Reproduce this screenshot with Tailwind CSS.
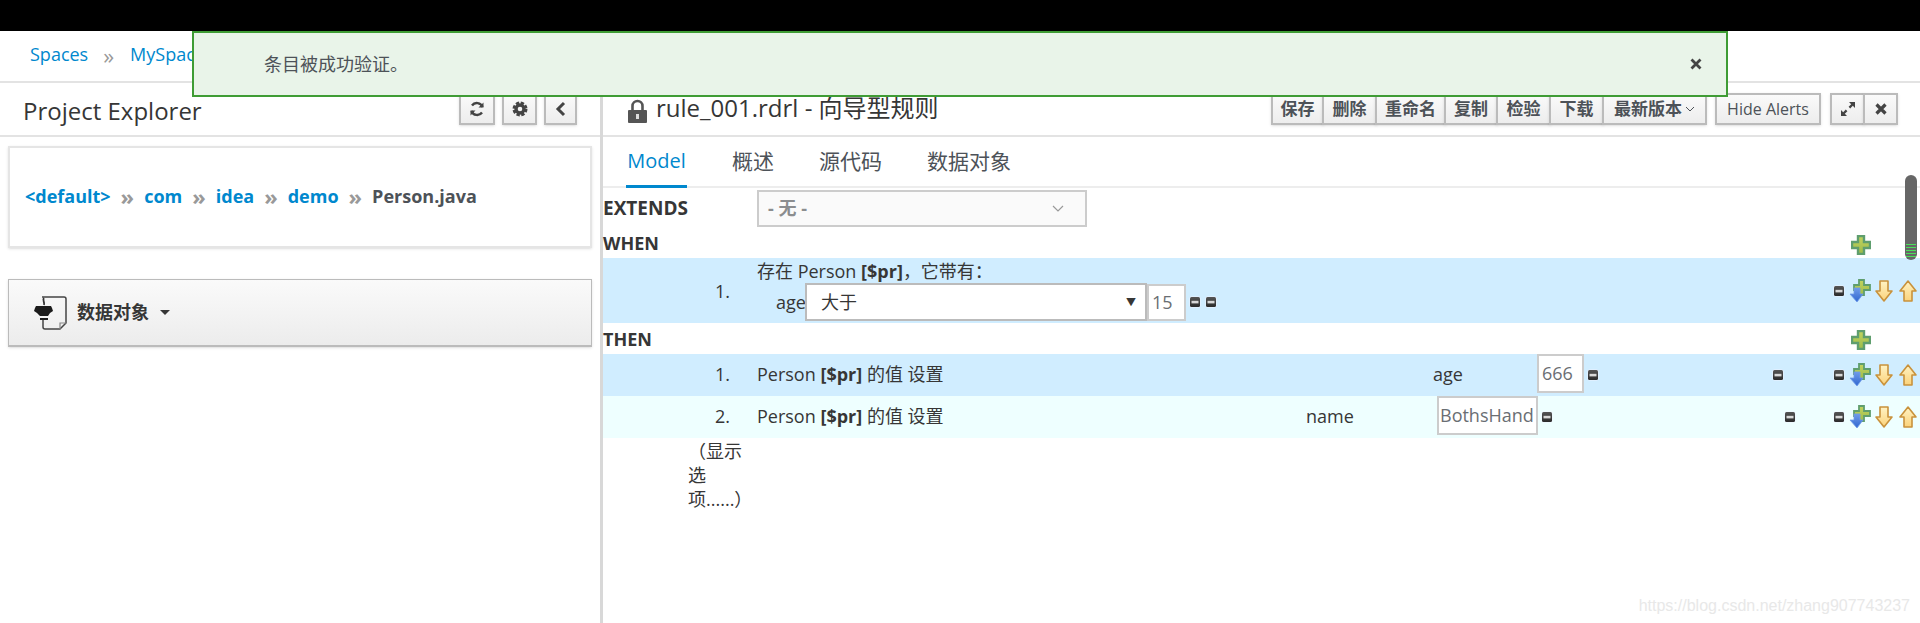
<!DOCTYPE html>
<html lang="en">
<head>
  <meta charset="UTF-8" />
  <title>rule_001.rdrl</title>
  <script src="https://cdn.jsdelivr.net/npm/@tailwindcss/browser@4"></script>
</head>
<body class="relative h-[623px] overflow-hidden bg-white font-['Open_Sans','Noto_Sans_CJK_SC',sans-serif] text-[#363636]">

  <!-- Shared icons -->
  <svg class="absolute h-0 w-0">
    <defs>
      <linearGradient id="plusFill" x1="0" y1="0" x2="0" y2="1"><stop offset="0" stop-color="#c3d45f" /><stop offset="1" stop-color="#9dbb4a" /></linearGradient>
      <linearGradient id="arrowFill" x1="0" y1="0" x2="0" y2="1"><stop offset="0" stop-color="#fff3c4" /><stop offset="1" stop-color="#fbd27a" /></linearGradient>
      <linearGradient id="blueFill" x1="0" y1="0" x2="0" y2="1"><stop offset="0" stop-color="#6f9be8" /><stop offset="1" stop-color="#2f66d0" /></linearGradient>
      <linearGradient id="minusFill" x1="0" y1="0" x2="0" y2="1"><stop offset="0" stop-color="#555" /><stop offset="1" stop-color="#2b2b2b" /></linearGradient>
      <symbol id="i-plus" viewBox="0 0 20 20">
        <path d="M7 1h6v6h6v6h-6v6H7v-6H1V7h6z" fill="url(#plusFill)" stroke="#5f9e6e" stroke-width="2.400" />
      </symbol>
      <symbol id="i-minus" viewBox="0 0 12 12">
        <rect x="0.500" y="0.500" width="11" height="11" rx="2" fill="#eef3ff" />
        <rect x="1" y="1" width="10" height="10" rx="1.500" fill="url(#minusFill)" />
        <rect x="2.500" y="4.800" width="7" height="2.600" fill="#d8d8d8" />
      </symbol>
      <symbol id="i-combo" viewBox="0 0 22 24">
        <path d="M10 1h5v5h6v5h-6v5h-5v-5H5V6h5z" fill="url(#plusFill)" stroke="#5f9e6e" stroke-width="1.800" />
        <path d="M5 9h6v6h3l-6 8-7-8h4z" fill="url(#blueFill)" stroke="#6f9be8" stroke-width="0.800" />
      </symbol>
      <symbol id="i-down" viewBox="0 0 18 22">
        <path d="M5 1h8v10h4L9 21 1 11h4z" fill="url(#arrowFill)" stroke="#c9923c" stroke-width="1.600" stroke-linejoin="round" />
      </symbol>
      <symbol id="i-up" viewBox="0 0 18 22">
        <path d="M5 21h8V11h4L9 1 1 11h4z" fill="url(#arrowFill)" stroke="#c9923c" stroke-width="1.600" stroke-linejoin="round" />
      </symbol>
    </defs>
  </svg>

  <!-- Top bars -->
  <div class="h-[31px] bg-black"></div>
  <div class="flex h-[52px] items-center border-b-2 border-[#e3e3e3] pb-[3px] pl-[30px] text-[18px] text-[#0088ce]">
    <span>Spaces</span>
    <span class="ml-[15px] text-[22px] leading-none text-[#999]">»</span>
    <span class="ml-[16px]">MySpace</span>
  </div>

  <div class="flex h-[540px]">
    <!-- Left panel -->
    <div class="w-[600px] shrink-0">
      <div class="flex h-[54px] items-start justify-between border-b-2 border-[#e3e3e3] pt-[10px] pl-[23px] pr-[23px]">
        <span class="text-[24px] leading-[36px]">Project Explorer</span>
        <div class="flex gap-[7px]">
          <button class="flex h-[32px] w-[36px] items-center justify-center border-2 border-[#bbb] bg-linear-to-b from-[#fafafa] to-[#ededed] shadow-sm">
            <svg width="16" height="16" viewBox="0 0 16 16" fill="none" stroke="#444" stroke-width="2.400"><path d="M13.500 6A6 6 0 0 0 3 4.500" /><path d="M2.500 10A6 6 0 0 0 13 11.500" /><path d="M14.500 1.500v5h-5z" fill="#444" stroke="none" /><path d="M1.500 14.500v-5h5z" fill="#444" stroke="none" /></svg>
          </button>
          <button class="flex h-[32px] w-[35px] items-center justify-center border-2 border-[#bbb] bg-linear-to-b from-[#fafafa] to-[#ededed] shadow-sm">
            <svg width="16" height="16" viewBox="0 0 16 16" fill="none" stroke="#444"><circle cx="8" cy="8" r="4" stroke-width="3.400" /><circle cx="8" cy="8" r="6" stroke-width="3" stroke-dasharray="3.200 1.510" /></svg>
          </button>
          <button class="flex h-[32px] w-[33px] items-center justify-center border-2 border-[#bbb] bg-linear-to-b from-[#fafafa] to-[#ededed] shadow-sm">
            <svg width="12" height="16" viewBox="0 0 12 16" fill="none" stroke="#444" stroke-width="3"><path d="M9 2 3 8l6 6" /></svg>
          </button>
        </div>
      </div>

      <div class="mx-[8px] mt-[9px] flex h-[102px] items-center border-2 border-[#e5e5e5] pb-[2px] pl-[15px] text-[18px] font-bold text-[#0088ce] shadow-sm">
        <span>&lt;default&gt;</span>
        <span class="mx-[10px] text-[22px] leading-none text-[#999]">»</span>
        <span>com</span>
        <span class="mx-[10px] text-[22px] leading-none text-[#999]">»</span>
        <span>idea</span>
        <span class="mx-[10px] text-[22px] leading-none text-[#999]">»</span>
        <span>demo</span>
        <span class="mx-[10px] text-[22px] leading-none text-[#999]">»</span>
        <span class="text-[#4d5258]">Person.java</span>
      </div>

      <div class="mx-[8px] mt-[31px] flex h-[68px] items-center border border-b-2 border-[#bbb] bg-linear-to-b from-[#fafafa] to-[#ececec] pl-[24px] shadow-sm">
        <svg width="36" height="36" viewBox="0 0 36 36" fill="none">
          <path d="M9 2h22a2 2 0 0 1 2 2v24l-6 6H12a2 2 0 0 1-2-2v-8" stroke="#444" stroke-width="1.500" />
          <path d="M33 28h-6v6" stroke="#888" stroke-width="1.200" />
          <path d="M3 11h15l1 2 1 3-3 2-2 3H7l-3-3-3-2 1-3z" fill="#1b1b1b" />
          <path d="M7 24h8" stroke="#1b1b1b" stroke-width="2" />
          <path d="M11 3c-2 2 1 4 0 7" stroke="#333" stroke-width="1.800" />
        </svg>
        <span class="ml-[8px] text-[18px] font-bold">数据对象</span>
        <span class="ml-[11px] h-0 w-0 border-x-[5px] border-t-[5px] border-x-transparent border-t-[#363636]"></span>
      </div>
    </div>

    <!-- Right panel -->
    <div class="flex-1 border-l-[3px] border-[#d8d8d8]">
      <div class="flex h-[54px] items-start justify-between border-b-2 border-[#e3e3e3] pt-[10px] pl-[25px] pr-[22px]">
        <div class="flex items-center gap-[9px]">
          <svg class="mt-[6px]" width="19" height="24" viewBox="0 0 19 24"><path d="M4.500 12V7a5 5 0 0 1 10 0v5" fill="none" stroke="#555" stroke-width="2.600" /><rect y="11" width="19" height="13" rx="1" fill="#555" /><rect x="8" y="15" width="3" height="5" fill="#ddd" /></svg>
          <span class="text-[24px] leading-[30px]">rule_001.rdrl - 向导型规则</span>
        </div>
        <div class="flex items-start">
          <div class="flex h-[32px] text-[17px] font-semibold text-[#4d5258]">
            <button class="w-[53px] border-2 border-[#bbb] bg-linear-to-b from-[#fafafa] to-[#ededed] shadow-sm">保存</button>
            <button class="-ml-[2px] w-[55px] border-2 border-[#bbb] bg-linear-to-b from-[#fafafa] to-[#ededed] shadow-sm">删除</button>
            <button class="-ml-[2px] w-[71px] border-2 border-[#bbb] bg-linear-to-b from-[#fafafa] to-[#ededed] shadow-sm">重命名</button>
            <button class="-ml-[2px] w-[54px] border-2 border-[#bbb] bg-linear-to-b from-[#fafafa] to-[#ededed] shadow-sm">复制</button>
            <button class="-ml-[2px] w-[55px] border-2 border-[#bbb] bg-linear-to-b from-[#fafafa] to-[#ededed] shadow-sm">检验</button>
            <button class="-ml-[2px] w-[55px] border-2 border-[#bbb] bg-linear-to-b from-[#fafafa] to-[#ededed] shadow-sm">下载</button>
            <button class="-ml-[2px] flex w-[105px] items-center justify-center gap-[3px] border-2 border-[#bbb] bg-linear-to-b from-[#fafafa] to-[#ededed] shadow-sm">最新版本
              <svg width="10" height="6" viewBox="0 0 10 6" fill="none" stroke="#4d5258"><path d="m1 1 4 4 4-4" /></svg>
            </button>
          </div>
          <button class="ml-[8px] h-[32px] w-[106px] border-2 border-[#bbb] bg-linear-to-b from-[#fafafa] to-[#ededed] text-[16px] font-medium text-[#4d5258] shadow-sm">Hide Alerts</button>
          <div class="ml-[9px] flex h-[32px]">
            <button class="flex w-[35px] items-center justify-center border-2 border-[#bbb] bg-linear-to-b from-[#fafafa] to-[#ededed] shadow-sm">
              <svg width="16" height="16" viewBox="0 0 16 16" fill="#444"><path d="M9 1h6v6l-2.200-2.200-2.600 2.600-1.600-1.600 2.600-2.600zM7 15H1V9l2.200 2.200 2.600-2.600 1.600 1.600-2.600 2.600z" /></svg>
            </button>
            <button class="-ml-[2px] flex w-[35px] items-center justify-center border-2 border-[#bbb] bg-linear-to-b from-[#fafafa] to-[#ededed] shadow-sm">
              <svg width="12" height="12" viewBox="0 0 12 12" fill="none" stroke="#444" stroke-width="3.200"><path d="m1.500 1.500 9 9M10.500 1.500l-9 9" /></svg>
            </button>
          </div>
        </div>
      </div>

      <!-- Tabs -->
      <div class="flex h-[51px] border-b-2 border-[#ededed] pl-[23px] text-[21px] text-[#4d5258]">
        <span class="-mb-[2px] flex w-[61px] items-center justify-center border-b-[3px] border-[#0088ce] text-[20px] text-[#0088ce]">Model</span>
        <span class="ml-[45px] flex items-center">概述</span>
        <span class="ml-[45px] flex items-center">源代码</span>
        <span class="ml-[45px] flex items-center">数据对象</span>
      </div>

      <!-- EXTENDS -->
      <div class="flex h-[39px] items-end">
        <span class="w-[154px] self-center pt-[2px] text-[19px] font-bold">EXTENDS</span>
        <div class="flex h-[37px] w-[330px] items-center justify-between border-2 border-[#ccc] bg-[#fafafa] px-[9px] text-[18px] font-bold text-[#8b8d8f]">
          <span>- 无 -</span>
          <svg class="mr-[12px]" width="12" height="7" viewBox="0 0 12 7" fill="none" stroke="#999" stroke-width="1.200"><path d="m1 1 5 5 5-5" /></svg>
        </div>
      </div>

      <!-- WHEN -->
      <div class="flex h-[31px] items-center justify-between pr-[49px]">
        <span class="mt-[1px] text-[18px] font-bold">WHEN</span>
        <svg class="mt-[4px]" width="20" height="20"><use href="#i-plus" /></svg>
      </div>
      <div class="flex h-[65px] items-center bg-[#d0edff] text-[18px] leading-[24px]">
        <span class="w-[154px] shrink-0 pl-[112px]">1.</span>
        <div class="flex flex-col">
          <div class="h-[24px] -mt-[1px]">存在 Person <b>[$pr]</b>，它带有：</div>
          <div class="flex items-center">
            <span class="w-[48px] shrink-0 pl-[19px]">age</span>
            <div class="flex h-[38px] w-[342px] items-center justify-between border-2 border-[#bbb] bg-white pl-[14px] pr-[9px]">
              <span>大于</span>
              <span class="text-[10px]">▼</span>
            </div>
            <div class="flex h-[37px] w-[39px] items-center border-2 border-[#ccc] bg-white pl-[3px] text-[#6a6e73]">15</div>
            <svg class="ml-[3px]" width="12" height="12"><use href="#i-minus" /></svg>
            <svg class="ml-[4px]" width="12" height="12"><use href="#i-minus" /></svg>
          </div>
        </div>
        <div class="ml-auto flex items-center gap-[4px] pr-[3px]">
          <svg width="12" height="12"><use href="#i-minus" /></svg>
          <svg width="22" height="24"><use href="#i-combo" /></svg>
          <svg width="18" height="22"><use href="#i-down" /></svg>
          <svg class="ml-[2px]" width="18" height="22"><use href="#i-up" /></svg>
        </div>
      </div>

      <!-- THEN -->
      <div class="flex h-[31px] items-center justify-between pr-[49px]">
        <span class="mt-[1px] text-[18px] font-bold">THEN</span>
        <svg class="mt-[3px]" width="20" height="20"><use href="#i-plus" /></svg>
      </div>
      <div class="flex h-[42px] items-center bg-[#d0edff] text-[18px]">
        <span class="w-[154px] shrink-0 pb-[2px] pl-[112px]">1.</span>
        <span class="w-[676px] shrink-0 pb-[2px]">Person <b>[$pr]</b> 的值 设置</span>
        <span class="w-[104px] shrink-0 pb-[2px]">age</span>
        <div class="flex h-[39px] w-[47px] shrink-0 items-center self-start border-2 border-[#ccc] bg-white pl-[3px] text-[#6a6e73]">666</div>
        <svg class="ml-[3px]" width="12" height="12"><use href="#i-minus" /></svg>
        <svg class="ml-[173px]" width="12" height="12"><use href="#i-minus" /></svg>
        <div class="ml-auto flex items-center gap-[4px] pr-[3px]">
          <svg width="12" height="12"><use href="#i-minus" /></svg>
          <svg width="22" height="24"><use href="#i-combo" /></svg>
          <svg width="18" height="22"><use href="#i-down" /></svg>
          <svg class="ml-[2px]" width="18" height="22"><use href="#i-up" /></svg>
        </div>
      </div>
      <div class="flex h-[42px] items-center bg-[#eeffff] text-[18px]">
        <span class="w-[154px] shrink-0 pb-[2px] pl-[112px]">2.</span>
        <span class="w-[549px] shrink-0 pb-[2px]">Person <b>[$pr]</b> 的值 设置</span>
        <span class="w-[131px] shrink-0 pb-[2px]">name</span>
        <div class="flex h-[39px] w-[101px] shrink-0 items-center self-start overflow-hidden border-2 border-[#ccc] bg-white pl-[1px] text-[#6a6e73]">BothsHand</div>
        <svg class="ml-[3px]" width="12" height="12"><use href="#i-minus" /></svg>
        <svg class="ml-[231px]" width="12" height="12"><use href="#i-minus" /></svg>
        <div class="ml-auto flex items-center gap-[4px] pr-[3px]">
          <svg width="12" height="12"><use href="#i-minus" /></svg>
          <svg width="22" height="24"><use href="#i-combo" /></svg>
          <svg width="18" height="22"><use href="#i-down" /></svg>
          <svg class="ml-[2px]" width="18" height="22"><use href="#i-up" /></svg>
        </div>
      </div>

      <div class="pl-[85px] pt-[1px] text-[18px] leading-[24px]">
        <div>（显示</div>
        <div>选</div>
        <div>项......）</div>
      </div>
    </div>
  </div>

  <!-- Success toast -->
  <div class="absolute left-[192px] top-[31px] flex h-[66px] w-[1536px] items-center justify-between border-2 border-[#3f9c35] bg-[#e9f4e9] pl-[70px] pr-[24px] text-[18px] text-[#4d5258]">
    <span>条目被成功验证。</span>
    <svg width="12" height="12" viewBox="0 0 12 12" fill="none" stroke="#444" stroke-width="2.800"><path d="m1.500 1.500 9 9M10.500 1.500l-9 9" /></svg>
  </div>

  <!-- Scrollbar thumb -->
  <div class="absolute left-[1905px] top-[175px] flex h-[85px] w-[12px] flex-col justify-end gap-[2px] rounded-full bg-[#666] px-[1px] pb-[3px]">
    <div class="h-px bg-[#4ade5a]"></div>
    <div class="h-px bg-[#4ade5a]"></div>
    <div class="h-px bg-[#4ade5a]"></div>
    <div class="h-px bg-[#4ade5a]"></div>
    <div class="h-px bg-[#4ade5a]"></div>
  </div>

  <!-- Watermark -->
  <div class="absolute right-[10px] top-[594px] font-['Liberation_Sans',sans-serif] text-[16px] text-[#e8e8e8]">https://blog.csdn.net/zhang907743237</div>
</body>
</html>
